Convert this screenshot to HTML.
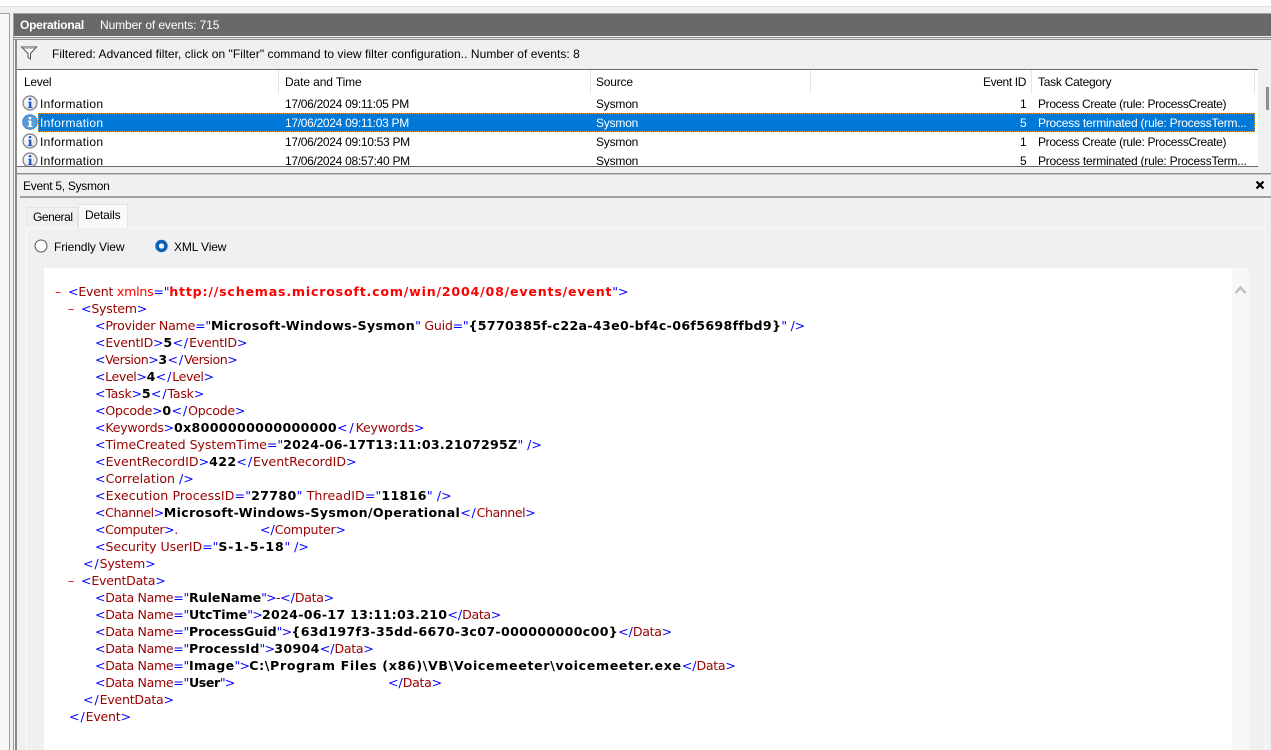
<!DOCTYPE html>
<html><head><meta charset="utf-8">
<style>
html,body{margin:0;padding:0;width:1271px;height:750px;overflow:hidden;background:#f0f0f0}
body{position:relative;font-family:"Liberation Sans",sans-serif;font-size:12px;color:#000}
.b{position:absolute}
.t{position:absolute;white-space:pre;line-height:16px;height:16px;font-size:12px;letter-spacing:-.2px}
.in{letter-spacing:.3px}
.d{letter-spacing:-.3px}
.p{letter-spacing:-.33px}
.pt{letter-spacing:-.22px}
.x{position:absolute;white-space:pre;line-height:17px;height:17px;font-family:"DejaVu Sans",sans-serif;font-size:12.6px;color:#900;letter-spacing:-.25px}
.x i{font-style:normal;color:#00f}
.x i.c{letter-spacing:.9px}
.x i.c0{letter-spacing:0}
.x i.q{letter-spacing:-.8px}
.x b{color:#000;font-weight:bold;letter-spacing:.33px}
.x b.l{letter-spacing:.66px}
.x b.n{letter-spacing:0}
.x u{text-decoration:none;font-weight:bold;color:#f00;letter-spacing:.8px}
.x s{text-decoration:none;color:#f00}
.dn{letter-spacing:-.35px}
.w{color:#fff}
</style></head><body>
<div class="b" style="left:0;top:0;width:1271px;height:6px;background:#fff"></div>
<div class="b" style="left:0;top:6px;width:1271px;height:1px;background:#e3e3e3"></div>
<div class="b" style="left:0;top:13px;width:9px;height:737px;background:#f7f7f7;border-top:1px solid #a0a0a0;border-right:1px solid #a0a0a0;box-sizing:content-box"></div>
<div class="b" style="left:13px;top:13px;width:1258px;height:1px;background:#a0a0a0"></div>
<div class="b" style="left:13px;top:14px;width:1258px;height:22px;background:#696969"></div>
<div class="b" style="left:13px;top:14px;width:1px;height:736px;background:#a0a0a0"></div>
<div class="b" style="left:14px;top:37px;width:1257px;height:3px;background:#8c8c8c"></div>
<div class="b" style="left:14px;top:38px;width:1257px;height:1px;background:#e4e4e4"></div>
<div class="b" style="left:15px;top:40px;width:2px;height:710px;background:#8c8c8c"></div>

<div class="t w" style="left:20px;top:17px;font-weight:bold;letter-spacing:-.25px;color:#fff">Operational</div>
<div class="t w" style="left:100px;top:17px;letter-spacing:-.1px">Number of events: 715</div>

<svg class="b" style="left:20px;top:46px" width="18" height="14" viewBox="0 0 18 14"><path d="M1.5 1 H16.5 L10.5 7.5 V13 L8 11.5 V7.5 Z" fill="#fff" stroke="#555" stroke-width="1"/><path d="M4 2.5 H14" stroke="#bbb"/></svg>
<div class="t" style="left:52px;top:46px;letter-spacing:.05px">Filtered: Advanced filter, click on "Filter" command to view filter configuration.. Number of events: 8</div>

<div class="b" style="left:17px;top:69px;width:1241px;height:98px;background:#fff;border-top:1px solid #696969;border-bottom:1px solid #696969;box-sizing:border-box"></div>
<div class="b" style="left:1258px;top:70px;width:13px;height:96px;background:#f0f0f0"></div>
<div class="b" style="left:1266px;top:87px;width:3px;height:23px;background:#8f8f8f"></div>
<div class="b" style="left:278px;top:70px;width:1px;height:24px;background:#e5e5e5"></div>
<div class="b" style="left:590px;top:70px;width:1px;height:24px;background:#e5e5e5"></div>
<div class="b" style="left:810px;top:70px;width:1px;height:24px;background:#e5e5e5"></div>
<div class="b" style="left:1031px;top:70px;width:1px;height:24px;background:#e5e5e5"></div>
<div class="b" style="left:1254px;top:70px;width:1px;height:24px;background:#e5e5e5"></div>

<div class="t" style="left:24px;top:74px;letter-spacing:-.28px">Level</div>
<div class="t" style="left:285px;top:74px;letter-spacing:-.11px">Date and Time</div>
<div class="t" style="left:596px;top:74px">Source</div>
<div class="t" style="left:983px;top:74px;letter-spacing:-.38px">Event ID</div>
<div class="t" style="left:1038px;top:74px;letter-spacing:-.26px">Task Category</div>

<div class="b" style="left:38px;top:113px;width:1217px;height:19px;background:#0078d7;outline:1px dotted #f0a040;outline-offset:-1px"></div>

<svg width="0" height="0" style="position:absolute"><defs>
<radialGradient id="g" cx=".4" cy=".35" r=".8"><stop offset="0" stop-color="#fff"/><stop offset="1" stop-color="#d4d8e0"/></radialGradient>
<symbol id="info" viewBox="0 0 16 16"><circle cx="8" cy="8" r="7" fill="url(#g)" stroke="#7b7f87" stroke-width="1.2"/><rect x="6.6" y="3" width="2.8" height="2.4" rx="1" fill="#2a5bc0"/><path d="M6 6.6H9.4V12H10.4V13H5.8V12H6.9V7.6H6Z" fill="#2a5bc0"/></symbol>
</defs></svg>
<svg class="b" style="left:22px;top:95px" width="16" height="16"><use href="#info"/></svg>
<svg class="b" style="left:22px;top:114px" width="16" height="16"><circle cx="8" cy="8" r="7.3" fill="#5b9bd8" stroke="#3f86c9"/><rect x="6.6" y="3" width="2.8" height="2.4" rx="1" fill="#fff"/><path d="M6 6.6H9.4V12H10.4V13H5.8V12H6.9V7.6H6Z" fill="#fff"/></svg>
<svg class="b" style="left:22px;top:133px" width="16" height="16"><use href="#info"/></svg>
<svg class="b" style="left:22px;top:152px" width="16" height="14" viewBox="0 0 16 14"><use href="#info" width="16" height="16"/></svg>

<div class="t in" style="left:40px;top:96px">Information</div>
<div class="t d" style="left:285px;top:96px">17/06/2024 09:11:05 PM</div>
<div class="t" style="left:596px;top:96px">Sysmon</div>
<div class="t" style="left:1020px;top:96px">1</div>
<div class="t p" style="left:1038px;top:96px">Process Create (rule: ProcessCreate)</div>

<div class="t w in" style="left:40px;top:115px">Information</div>
<div class="t w d" style="left:285px;top:115px">17/06/2024 09:11:03 PM</div>
<div class="t w" style="left:596px;top:115px">Sysmon</div>
<div class="t w" style="left:1020px;top:115px">5</div>
<div class="t w pt" style="left:1038px;top:115px">Process terminated (rule: ProcessTerm...</div>

<div class="t in" style="left:40px;top:134px">Information</div>
<div class="t d" style="left:285px;top:134px">17/06/2024 09:10:53 PM</div>
<div class="t" style="left:596px;top:134px">Sysmon</div>
<div class="t" style="left:1020px;top:134px">1</div>
<div class="t p" style="left:1038px;top:134px">Process Create (rule: ProcessCreate)</div>

<div class="b" style="left:17px;top:150px;width:1241px;height:16px;overflow:hidden">
<div class="t in" style="left:23px;top:3px">Information</div>
<div class="t d" style="left:268px;top:3px">17/06/2024 08:57:40 PM</div>
<div class="t" style="left:579px;top:3px">Sysmon</div>
<div class="t" style="left:1003px;top:3px">5</div>
<div class="t pt" style="left:1021px;top:3px">Process terminated (rule: ProcessTerm...</div>
</div>

<div class="b" style="left:16px;top:173px;width:1255px;height:1px;background:#8c8c8c"></div>
<div class="b" style="left:17px;top:174px;width:1254px;height:1px;background:#c8c8c8"></div>
<div class="t" style="left:23px;top:178px;letter-spacing:-.28px">Event 5, Sysmon</div>
<svg class="b" style="left:1255px;top:180px" width="10" height="10" viewBox="0 0 10 10"><path d="M1.5 1.5L8.5 8.5M8.5 1.5L1.5 8.5" stroke="#000" stroke-width="2.2"/></svg>
<div class="b" style="left:20px;top:196px;width:1251px;height:2px;background:#a0a0a0"></div>

<div class="b" style="left:26px;top:227px;width:1240px;height:523px;background:#f0f0f0;border-top:1px solid #fafafa;border-left:1px solid #fafafa;box-sizing:border-box"></div>
<div class="b" style="left:27px;top:207px;width:51px;height:20px;background:#f0f0f0;border:1px solid #e3e3e3;border-bottom:0;box-sizing:border-box"></div>
<div class="b" style="left:78px;top:204px;width:50px;height:24px;background:#f9f9f9;border:1px solid #e3e3e3;border-bottom:0;box-sizing:border-box"></div>
<div class="t" style="left:33px;top:209px;letter-spacing:-.45px">General</div>
<div class="t" style="left:85px;top:207px;letter-spacing:-.17px">Details</div>

<svg class="b" style="left:34px;top:239px" width="14" height="14"><circle cx="7" cy="7" r="6" fill="#fff" stroke="#555"/></svg>
<div class="t" style="left:54px;top:239px;letter-spacing:-.11px">Friendly View</div>
<svg class="b" style="left:155px;top:239px" width="14" height="14"><circle cx="6.5" cy="7" r="6.2" fill="#0a62b8"/><circle cx="6.5" cy="7" r="2.6" fill="#fff"/></svg>
<div class="t" style="left:174px;top:239px;letter-spacing:-.13px">XML View</div>

<div class="b" style="left:44px;top:268px;width:1188px;height:482px;background:#fff"></div>
<div class="b" style="left:1232px;top:268px;width:17px;height:482px;background:#f7f7f7"></div>
<svg class="b" style="left:1234px;top:284px" width="13" height="11" viewBox="0 0 13 11"><path d="M1.5 9L6.5 3.5L11.5 9" fill="none" stroke="#bdbdbd" stroke-width="2.4"/></svg>
<div class="b" style="left:1265px;top:198px;width:1px;height:552px;background:#fbfbfb"></div>

<div class="x" style="left:55px;top:283px"><s>– </s></div>
<div class="x" style="left:68px;top:283px"><i>&lt;</i>Event <s>xmlns</s><i>="</i><u>http://schemas.microsoft.com/win/2004/08/events/event</u><i>"&gt;</i></div>
<div class="x" style="left:68px;top:300px"><s>–</s></div>
<div class="x" style="left:81px;top:300px"><i>&lt;</i>System<i>&gt;</i></div>
<div class="x" style="left:95px;top:317px"><i>&lt;</i>Provider Name<i>="</i><b>Microsoft-Windows-Sysmon</b><i>"</i> Guid<i>="</i><b>{5770385f-c22a-43e0-bf4c-06f5698ffbd9}</b><i>" /&gt;</i></div>
<div class="x" style="left:95px;top:334px"><i>&lt;</i>EventID<i>&gt;</i><b>5</b><i class="c">&lt;/</i>EventID<i>&gt;</i></div>
<div class="x" style="left:95px;top:351px;letter-spacing:-.45px"><i>&lt;</i>Version<i>&gt;</i><b>3</b><i class="c">&lt;/</i>Version<i>&gt;</i></div>
<div class="x" style="left:95px;top:368px;letter-spacing:-.4px"><i>&lt;</i>Level<i>&gt;</i><b>4</b><i class="c">&lt;/</i>Level<i>&gt;</i></div>
<div class="x" style="left:95px;top:385px"><i>&lt;</i>Task<i>&gt;</i><b>5</b><i class="c">&lt;/</i>Task<i>&gt;</i></div>
<div class="x" style="left:95px;top:402px"><i>&lt;</i>Opcode<i>&gt;</i><b>0</b><i class="c">&lt;/</i>Opcode<i>&gt;</i></div>
<div class="x" style="left:95px;top:419px"><i>&lt;</i>Keywords<i>&gt;</i><b>0x8000000000000000</b><i class="c" style="letter-spacing:1.9px">&lt;/</i>Keywords<i>&gt;</i></div>
<div class="x" style="left:95px;top:436px;letter-spacing:-.05px"><i>&lt;</i>TimeCreated SystemTime<i>="</i><b style="letter-spacing:.26px">2024-06-17T13:11:03.2107295Z</b><i>" /&gt;</i></div>
<div class="x" style="left:95px;top:453px;letter-spacing:0"><i>&lt;</i>EventRecordID<i>&gt;</i><b>422</b><i class="c">&lt;/</i>EventRecordID<i>&gt;</i></div>
<div class="x" style="left:95px;top:470px;letter-spacing:0"><i>&lt;</i>Correlation <i>/&gt;</i></div>
<div class="x" style="left:95px;top:487px;letter-spacing:.1px"><i>&lt;</i>Execution ProcessID<i>="</i><b>27780</b><i>"</i> ThreadID<i>="</i><b>11816</b><i>" /&gt;</i></div>
<div class="x" style="left:95px;top:504px;letter-spacing:-.45px"><i>&lt;</i>Channel<i>&gt;</i><b>Microsoft-Windows-Sysmon/Operational</b><i class="c" style="letter-spacing:.8px">&lt;/</i>Channel<i>&gt;</i></div>
<div class="x" style="left:95px;top:521px;letter-spacing:-.45px"><i>&lt;</i>Computer<i>&gt;</i>.</div>
<div class="x" style="left:260px;top:521px"><i class="c0">&lt;/</i>Computer<i>&gt;</i></div>
<div class="x" style="left:95px;top:538px;letter-spacing:-.08px"><i>&lt;</i>Security UserID<i>="</i><b style="letter-spacing:.8px">S-1-5-18</b><i>" /&gt;</i></div>
<div class="x" style="left:83px;top:555px"><i class="c">&lt;/</i>System<i>&gt;</i></div>
<div class="x" style="left:68px;top:572px"><s>–</s></div>
<div class="x" style="left:81px;top:572px"><i>&lt;</i>EventData<i>&gt;</i></div>
<div class="x dn" style="left:95px;top:589px"><i>&lt;</i>Data Name<i>="</i><b class="n">RuleName</b><i class="q">"&gt;</i>-<i class="c0">&lt;/</i>Data<i>&gt;</i></div>
<div class="x dn" style="left:95px;top:606px"><i>&lt;</i>Data Name<i>="</i><b class="n">UtcTime</b><i class="q">"&gt;</i><b style="letter-spacing:.29px">2024-06-17 13:11:03.210</b><i class="c0">&lt;/</i>Data<i>&gt;</i></div>
<div class="x dn" style="left:95px;top:623px"><i>&lt;</i>Data Name<i>="</i><b class="n">ProcessGuid</b><i class="q">"&gt;</i><b>{63d197f3-35dd-6670-3c07-000000000c00}</b><i class="c0">&lt;/</i>Data<i>&gt;</i></div>
<div class="x dn" style="left:95px;top:640px"><i>&lt;</i>Data Name<i>="</i><b style="letter-spacing:.2px">ProcessId</b><i class="q">"&gt;</i><b>30904</b><i class="c0">&lt;/</i>Data<i>&gt;</i></div>
<div class="x dn" style="left:95px;top:657px"><i>&lt;</i>Data Name<i>="</i><b>Image</b><i class="q">"&gt;</i><b class="l">C:\Program Files (x86)\VB\Voicemeeter\voicemeeter.exe</b><i class="c0">&lt;/</i>Data<i>&gt;</i></div>
<div class="x dn" style="left:95px;top:674px"><i>&lt;</i>Data Name<i>="</i><b style="letter-spacing:-.4px">User</b><i class="q">"&gt;</i></div>
<div class="x dn" style="left:388px;top:674px"><i class="c0">&lt;/</i>Data<i>&gt;</i></div>
<div class="x" style="left:83px;top:691px"><i class="c">&lt;/</i>EventData<i>&gt;</i></div>
<div class="x" style="left:69px;top:708px"><i class="c">&lt;/</i>Event<i>&gt;</i></div>
</body></html>
